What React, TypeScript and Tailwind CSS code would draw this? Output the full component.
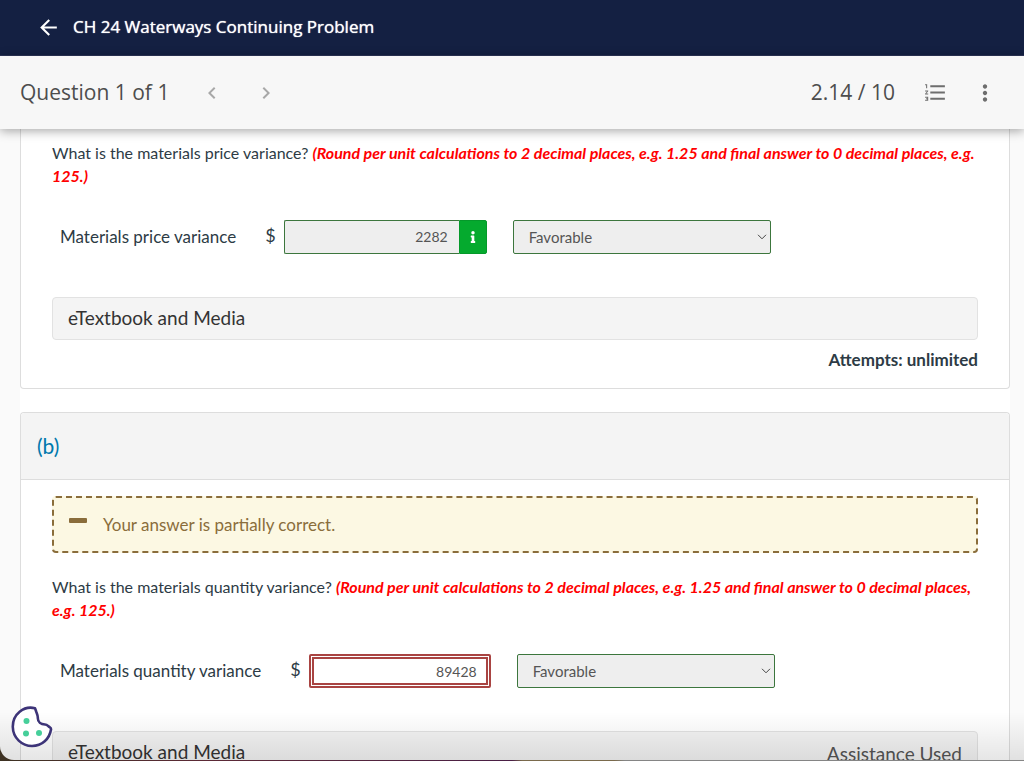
import React, { useState } from "react";
import {
  MdArrowBack,
  MdChevronLeft,
  MdChevronRight,
  MdFormatListNumbered,
  MdMoreVert,
} from "react-icons/md";
import { FaInfo } from "react-icons/fa";

const Header = () => {
  return (
    <header className="flex h-14 shrink-0 items-center border-b border-[#2c3558] bg-[#142042] pb-px pl-9 text-white">
      <button type="button" aria-label="Back" className="mr-3">
        <MdArrowBack size={25} />
      </button>
      <h1 className="font-['Open_Sans',sans-serif] text-[17px] leading-6 font-medium text-shadow-[0_0_1px_#fff]">
        CH 24 Waterways Continuing Problem
      </h1>
    </header>
  );
};

const Toolbar = () => {
  return (
    <nav className="relative z-10 flex h-[73px] shrink-0 items-center bg-[#f7f7f7] pr-[26px] pl-5 font-['Open_Sans',sans-serif] text-[21px] text-[#4d4d4d] shadow-[0_2px_10px_rgba(0,0,0,0.35)]">
      <span>Question 1 of 1</span>
      <button type="button" aria-label="Previous question" className="ml-[31px] text-[#a8a8a8]">
        <MdChevronLeft size={24} />
      </button>
      <button type="button" aria-label="Next question" className="ml-[30px] text-[#a8a8a8]">
        <MdChevronRight size={24} />
      </button>
      <span className="ml-auto">2.14 / 10</span>
      <button type="button" aria-label="Question list" className="ml-7 text-[#6e6e6e]">
        <MdFormatListNumbered size={25} />
      </button>
      <button type="button" aria-label="More options" className="ml-6 text-[#6e6e6e]">
        <MdMoreVert size={26} />
      </button>
    </nav>
  );
};

const Prompt = ({ question, hint }: { question: string; hint: string }) => {
  return (
    <p className="text-base leading-[23px]">
      {question} <em className="font-bold text-[#f00] italic">{hint}</em>
    </p>
  );
};

const DirectionSelect = ({ label }: { label: string }) => {
  const [value, setValue] = useState("Favorable");

  return (
    <div className="relative w-[258px]">
      <select
        aria-label={label}
        value={value}
        onChange={(e) => {
          setValue(e.target.value);
        }}
        className="h-[34px] w-full appearance-none rounded-xs border border-[#3c763d] bg-[#eee] pl-[15px] text-[15px] text-[#555]"
      >
        <option>Favorable</option>
        <option>Unfavorable</option>
        <option>Neither favorable nor unfavorable</option>
      </select>
      <svg
        viewBox="0 0 10 6"
        className="pointer-events-none absolute top-[14px] right-1 h-[6px] w-[10px]"
        fill="none"
        stroke="#444"
      >
        <path d="M1 0.8 L5 4.8 L9 0.8" />
      </svg>
    </div>
  );
};

const PriceAnswer = () => {
  const [amount, setAmount] = useState("2282");

  return (
    <div className="mt-[33px] flex items-center pl-2">
      <label htmlFor="price" className="text-[17px] leading-6">
        Materials price variance
      </label>
      <span className="ml-[29px] pb-1 text-lg leading-6">$</span>
      <div className="ml-2 flex h-[34px] w-[203px]">
        <input
          id="price"
          type="text"
          value={amount}
          onChange={(e) => {
            setAmount(e.target.value);
          }}
          className="min-w-0 flex-1 rounded-l-xs border border-r-0 border-[#3c763d] bg-[#eee] pr-[11px] text-right text-sm text-[#555]"
        />
        <button
          type="button"
          aria-label="Answer information"
          className="flex w-7 items-center justify-center rounded-r-xs border border-[#05992a] bg-[#05aa2e] text-white"
        >
          <FaInfo size={12} />
        </button>
      </div>
      <div className="ml-[26px]">
        <DirectionSelect label="Price variance direction" />
      </div>
    </div>
  );
};

const QuantityAnswer = () => {
  const [amount, setAmount] = useState("89428");

  return (
    <div className="mt-[33px] flex items-center pl-2">
      <label htmlFor="quantity" className="text-[17px] leading-6">
        Materials quantity variance
      </label>
      <span className="ml-[29px] pb-1 text-lg leading-6">$</span>
      <input
        id="quantity"
        type="text"
        value={amount}
        onChange={(e) => {
          setAmount(e.target.value);
        }}
        className="ml-2 h-[34px] w-[182px] rounded-xs border-[5px] border-double border-[#a94442] bg-white pr-[9px] text-right text-sm text-[#555]"
      />
      <div className="ml-[26px]">
        <DirectionSelect label="Quantity variance direction" />
      </div>
    </div>
  );
};

const MediaButton = ({ assistance }: { assistance?: boolean }) => {
  return (
    <button
      type="button"
      className="mt-[43px] flex h-[43px] w-full items-center justify-between rounded border border-[#e2e2e2] bg-[#f4f4f4] px-[15px] pb-0.5 text-[19px] leading-6 text-[#333]"
    >
      <span>eTextbook and Media</span>
      {assistance && <span className="pt-1 text-[#555]">Assistance Used</span>}
    </button>
  );
};

const CookieButton = () => {
  return (
    <button type="button" aria-label="Cookie preferences" className="absolute bottom-3 left-[11px]">
      <svg width="42" height="42" viewBox="0 0 42 42">
        <path
          d="M24 2.2 C13 -0.6 1.5 8 1.8 21 C2 32 11 40 21 40 C31 40 38.500 33 40 23.500 C40.200 22.500 39.500 21.800 38.800 21.300 C37 20 36 18.500 34 18.500 C30 18.500 26.800 16 26.800 12 C27 9 25.500 7 25 5 Z"
          fill="#fff"
          stroke="#3d3478"
          strokeWidth="2.600"
          strokeLinejoin="round"
        />
        <circle cx="15.500" cy="15" r="3" fill="#46cf9a" />
        <circle cx="15" cy="27.500" r="3" fill="#46cf9a" />
        <circle cx="28" cy="27" r="3" fill="#46cf9a" />
      </svg>
    </button>
  );
};

const App = () => {
  return (
    <div className="h-screen overflow-hidden bg-[linear-gradient(90deg,#3d3222_0%,#5c2a36_20%,#4a1f45_50%,#7a6a4c_51%,#7a6a4c_60%,#858585_61%,#858585_100%)] pb-px">
      <div className="relative flex h-full flex-col overflow-hidden rounded-bl-[14px] bg-[#fafafa] font-[Lato,sans-serif] text-[#2d3b45]">
        <Header />
        <Toolbar />
        <main className="min-h-0 flex-1 overflow-hidden pr-[14px] pl-5">
          <div className="bg-white">
            <section className="rounded-b border border-t-0 border-[#ddd] px-[31px] pt-3 pb-4">
              <Prompt
                question="What is the materials price variance?"
                hint="(Round per unit calculations to 2 decimal places, e.g. 1.25 and final answer to 0 decimal places, e.g. 125.)"
              />
              <PriceAnswer />
              <MediaButton />
              <p className="mt-2 text-right text-[17px] leading-6 font-bold">Attempts: unlimited</p>
            </section>

            <section className="mt-[23px] rounded-t border border-b-0 border-[#ddd]">
              <h2 className="flex h-[67px] items-center rounded-t border-b border-[#ddd] bg-[#f4f4f4] px-4 text-[21px] text-[#0079ad]">
                (b)
              </h2>
              <div className="px-[31px] pt-4 pb-10">
                <div className="mb-[22px] flex h-[57px] items-center rounded border-2 border-dashed border-[#8a6d3b] bg-[#fcf8e3] pl-[15px] text-[17px] text-[#8a6d3b]">
                  <svg width="18" height="14" viewBox="0 0 18 14" className="mr-4">
                    <rect width="18" height="5" rx="1" fill="#8a6d3b" />
                  </svg>
                  Your answer is partially correct.
                </div>
                <Prompt
                  question="What is the materials quantity variance?"
                  hint="(Round per unit calculations to 2 decimal places, e.g. 1.25 and final answer to 0 decimal places, e.g. 125.)"
                />
                <QuantityAnswer />
                <MediaButton assistance />
              </div>
            </section>
          </div>
        </main>
        <div className="pointer-events-none absolute inset-x-0 bottom-0 h-12 bg-linear-to-t from-black/10 to-transparent" />
        <CookieButton />
      </div>
    </div>
  );
};

export default App;
